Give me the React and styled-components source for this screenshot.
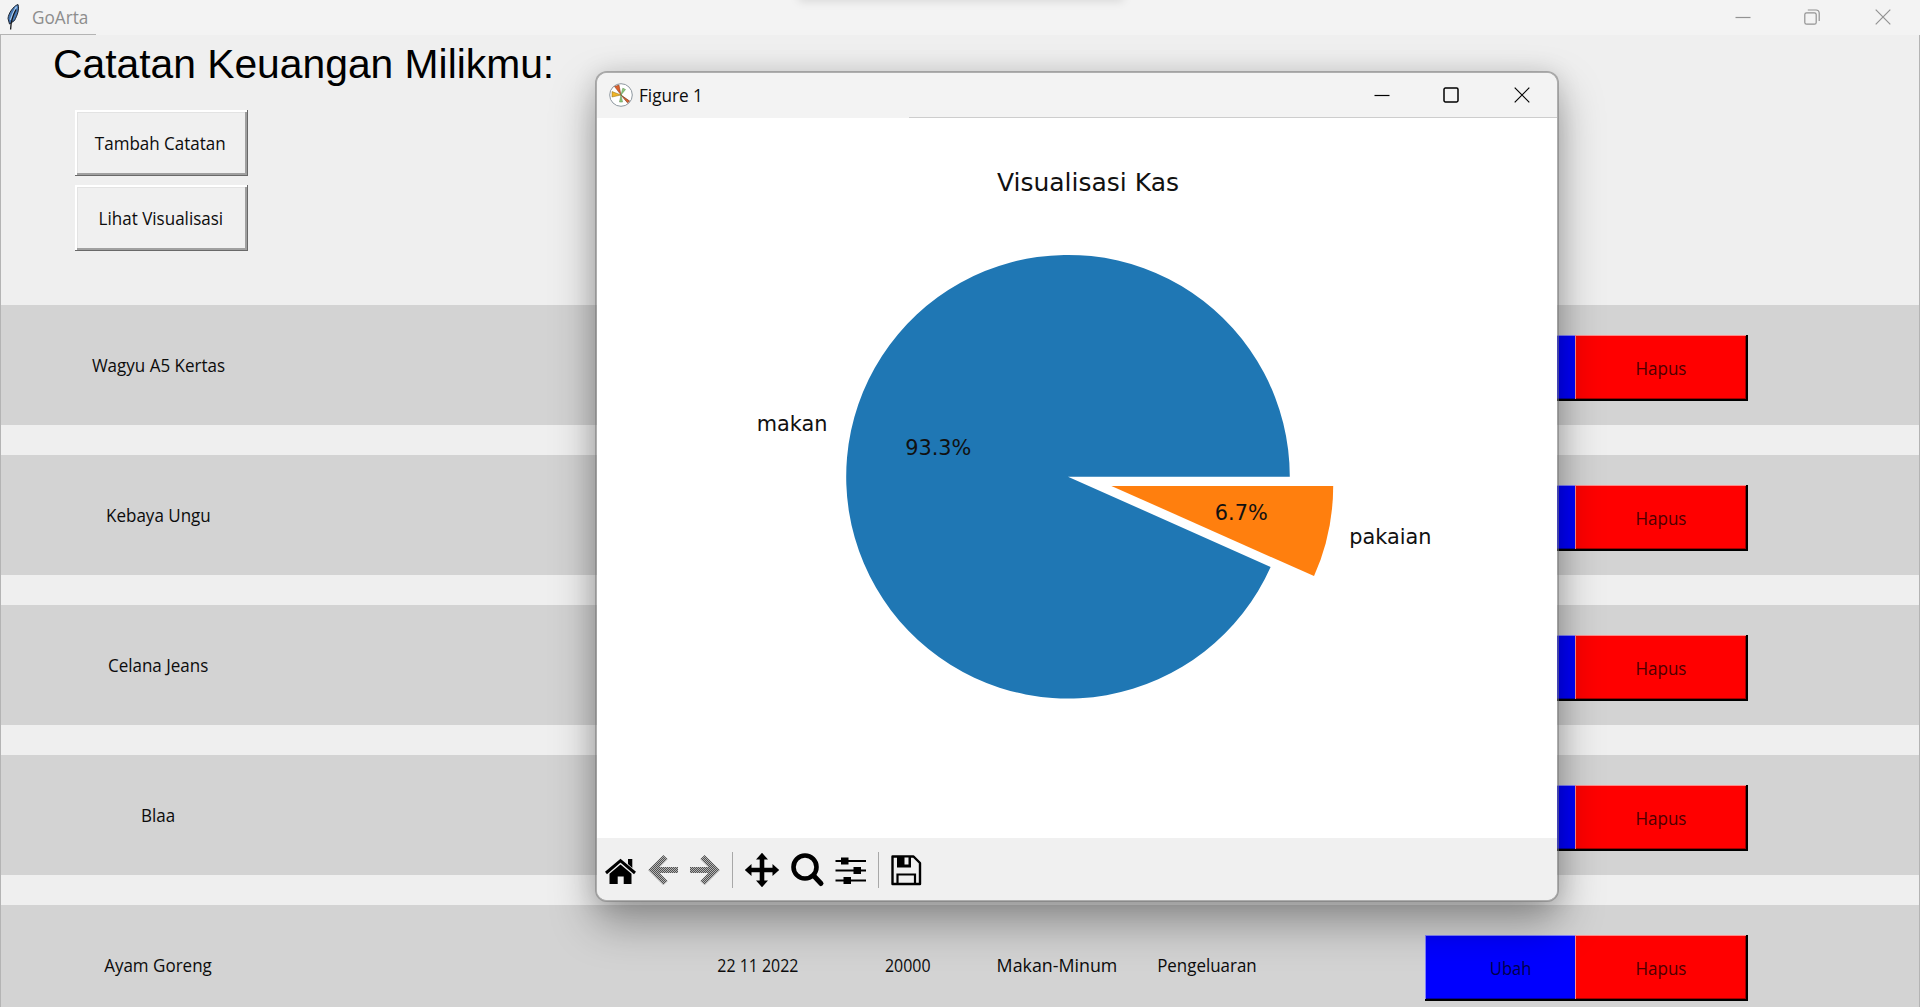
import React from "react";
import styled, { createGlobalStyle } from "styled-components";

const Global = createGlobalStyle`
  * { box-sizing: border-box; }
  html, body { margin: 0; padding: 0; overflow: hidden; }
`;

const uiFont = `"Open Sans", "Noto Sans", sans-serif`;

const Screen = styled.div`
  position: relative;
  width: 1920px;
  height: 1007px;
  overflow: hidden;
  background: #efefef;
  font-family: ${uiFont};
  display: flex;
  flex-direction: column;
`;

const TitleBar = styled.header`
  height: ${(p) => p.$height}px;
  flex: none;
  display: flex;
  align-items: center;
  padding: ${(p) => p.$padding};
  background: #f3f3f3;
`;

const MainBar = styled(TitleBar)`
  background: linear-gradient(#b4b4b4, #b4b4b4) 0 100% / 96px 1px no-repeat, #f3f3f3;
`;

const FigureBar = styled(TitleBar)`
  background: linear-gradient(#cdcdcd, #cdcdcd) 100% 100% / 648px 1px no-repeat, #f3f3f3;
  border-radius: 10px 10px 0 0;
`;

const Label = styled.span`
  display: inline-block;
  flex: none;
  white-space: pre;
  line-height: 24px;
  font-size: ${(p) => p.$size || 18}px;
  color: ${(p) => p.$color || "#0c0c0c"};
  transform: scaleX(${(p) => p.$stretch || 0.945});
  transform-origin: ${(p) => p.$origin || "center"};
`;

const Controls = styled.div`
  margin-left: auto;
  display: flex;
  gap: 53px;
  color: ${(p) => p.$color};

  svg:last-child {
    margin-left: 2px;
  }
`;

const Body = styled.main`
  flex: 1;
  min-height: 0;
  border-left: 1px solid #b4b4b4;
  border-right: 1px solid #b4b4b4;
`;

const Header = styled.section`
  height: 270px;
  padding: 5px 0 0 52px;
`;

const Heading = styled.h1`
  margin: 0 0 22px;
  font: 400 40.8px/48px "Liberation Sans", Arial, sans-serif;
  color: #000;
`;

const Actions = styled.div`
  display: flex;
  flex-direction: column;
  gap: 9px;
  padding-left: 22px;
`;

const TkButton = styled.button`
  width: 173px;
  height: 66px;
  padding: 0 2px 1px 0;
  display: flex;
  align-items: center;
  justify-content: center;
  font-family: inherit;
  border: 0;
  background: #f0f0f0;
  box-shadow: inset -1px -1px #696969, inset 2px 2px #fff, inset -3px -3px #a0a0a0, inset 3px 3px #e3e3e3;
`;

const RowButton = styled(TkButton)`
  flex: none;
  background: ${(p) => p.$fill};
  margin-left: ${(p) => p.$shift || 0}px;
  box-shadow: inset -2px -2px #000, inset 1px 1px ${(p) => p.$light}, inset -3px -3px ${(p) => p.$dark};
`;

const Rows = styled.section`
  display: flex;
  flex-direction: column;
  gap: 30px;
`;

const Row = styled.div`
  height: 120px;
  flex: none;
  display: grid;
  grid-template-columns: 314px 886px 1fr;
  align-items: center;
  background: #d3d3d3;
`;

const Name = styled.div`
  display: flex;
  justify-content: center;
`;

const Details = styled.div`
  display: grid;
  grid-template-columns: 172px 128px 170px 130px;
  padding-left: 357px;
  justify-items: center;
`;

const RowActions = styled.div`
  display: flex;
  padding: 5px 0 0 224px;
  margin-top: 1px;
`;

const TopShade = styled.div`
  position: absolute;
  left: 798px;
  top: -8px;
  width: 326px;
  height: 8px;
  border-radius: 8px;
  box-shadow: 0 1px 10px rgba(0, 0, 0, 0.13);
`;

const FigureWindow = styled.section`
  position: absolute;
  left: 595px;
  top: 71px;
  width: 964px;
  height: 831px;
  border: 2px solid rgba(120, 120, 120, 0.55);
  border-radius: 12px;
  background: #fff;
  background-clip: padding-box;
  display: flex;
  flex-direction: column;
  box-shadow: 0 21px 44px rgba(0, 0, 0, 0.34), 0 0 24px rgba(0, 0, 0, 0.1);
`;

const Canvas = styled.div`
  height: 720px;
  flex: none;
`;

const Toolbar = styled.footer`
  flex: 1;
  display: flex;
  align-items: center;
  padding: 3px 0 1px 6px;
  background: #f0f0f0;
  border-radius: 0 0 10px 10px;
`;

const Tool = styled.svg`
  width: 36px;
  height: 36px;
  flex: none;
  display: block;
  margin-right: ${(p) => p.$after || 0}px;
`;

const Separator = styled.i`
  width: 1px;
  height: 36px;
  background: #a8a8a8;
  margin-right: ${(p) => p.$after}px;
`;

const Glyph = styled.svg`
  display: block;
  width: 16px;
  height: 16px;
  fill: none;
  stroke: currentColor;
  stroke-width: 1.2;
`;

const Feather = styled.svg`
  width: 16px;
  height: 28px;
  margin-right: 9px;
`;

const FigureIcon = styled.svg`
  width: 24px;
  height: 24px;
  margin-right: 6px;
`;

const entries = [
  { name: "Wagyu A5 Kertas" },
  { name: "Kebaya Ungu" },
  { name: "Celana Jeans" },
  { name: "Blaa" },
  {
    name: "Ayam Goreng",
    details: [
      { value: "22 11 2022", stretch: 0.885 },
      { value: "20000", stretch: 0.885 },
      { value: "Makan-Minum", stretch: 0.99 },
      { value: "Pengeluaran", stretch: 0.94 },
    ],
  },
];

function WindowControls({ color, restored }) {
  return (
    <Controls $color={color}>
      <Glyph viewBox="0 0 16 16"><path d="M.5 8.5H15.5" /></Glyph>
      <Glyph viewBox="0 0 16 16">
        {restored ? (
          <>
            <rect x=".8" y="3.8" width="11.4" height="11.4" rx="1.8" />
            <path d="M3.8 1H12q3.2 0 3.2 3.2V12" />
          </>
        ) : (
          <rect x="1" y="1" width="14" height="14" rx="1.4" strokeWidth="1.5" />
        )}
      </Glyph>
      <Glyph viewBox="0 0 16 16"><path d="M.7 .7 15.3 15.3M15.3 .7 .7 15.3" /></Glyph>
    </Controls>
  );
}

const R = 221.8;
const C = { x: 471, y: 358.7 };
const rad = Math.PI / 180;

function wedge(cx, cy, from, to, large) {
  const px = (a) => cx + R * Math.cos(a * rad);
  const py = (a) => cy + R * Math.sin(a * rad);
  return `M${cx} ${cy}L${px(from)} ${py(from)}A${R} ${R} 0 ${large} 1 ${px(to)} ${py(to)}Z`;
}

function PieChart() {
  const ex = C.x + 43.4;
  const ey = C.y + 9.2;
  return (
    <svg width="960" height="720" viewBox="0 0 960 720" fontFamily='"DejaVu Sans", sans-serif' fontSize="20.83" fill="#111">
      <path d={wedge(C.x, C.y, 24, 360, 1)} fill="#1f77b4" />
      <path d={wedge(ex, ey, 0, 24, 0)} fill="#ff7f0e" />
      <text x="491" y="72.5" fontSize="25" textAnchor="middle">Visualisasi Kas</text>
      <text x="230.5" y="313" textAnchor="end">makan</text>
      <text x="341.3" y="337.3" textAnchor="middle">93.3%</text>
      <text x="644.3" y="402" textAnchor="middle">6.7%</text>
      <text x="752.3" y="426">pakaian</text>
    </svg>
  );
}

function ToolIcons() {
  return (
    <Toolbar>
      <Tool viewBox="0 0 36 36" $after={7}>
        <path d="M3 21 17.5 8.600 32 21" fill="none" stroke="#000" strokeWidth="3" />
        <path d="M25 7h4.300v9L25 12zM6.500 21.700 17.500 12.600l11 9.100V32H20.700v-7.500h-6V32H6.500z" />
      </Tool>
      <Tool viewBox="0 0 36 36" $after={5}>
        <path d="M19.500 5 6.500 18 19.500 31M6.500 18H32" fill="none" stroke="url(#dots)" strokeWidth="6" />
        <defs>
          <pattern id="dots" width="2" height="2" patternUnits="userSpaceOnUse">
            <rect width="2" height="2" fill="#b4b4b4" />
            <rect width="1" height="1" fill="#505050" />
            <rect x="1" y="1" width="1" height="1" fill="#505050" />
          </pattern>
        </defs>
      </Tool>
      <Tool viewBox="0 0 36 36" $after={9}>
        <path d="M15.500 5 28.500 18 15.500 31M28.500 18H3" fill="none" stroke="url(#dots)" strokeWidth="6" />
      </Tool>
      <Separator $after={11} />
      <Tool viewBox="0 0 36 36" $after={10}>
        <path d="M18 .8 24 7.500H20.300V15.700H28.500V12L35.200 18 28.500 24V20.300H20.300V28.500H24L18 35.200 12 28.500H15.700V20.300H7.500V24L.8 18 7.500 12V15.700H15.700V7.500H12z" />
      </Tool>
      <Tool viewBox="0 0 36 36" $after={7}>
        <circle cx="15" cy="15" r="11.500" fill="none" stroke="#000" strokeWidth="4.600" />
        <path d="m23.500 23.500 7.500 8" stroke="#000" strokeWidth="5" strokeLinecap="round" />
      </Tool>
      <Tool viewBox="0 0 36 36" $after={9}>
        <path d="M2.500 9H33M2.500 18.500H33M2.500 28.500H33" stroke="#000" strokeWidth="2.200" />
        <path d="M8 5.500h7.500v7H8zM20.500 15h7.500v7h-7.500zM10.500 25h7.500v7h-7.500z" />
      </Tool>
      <Separator $after={9} />
      <Tool viewBox="0 0 36 36">
        <path d="M4.500 4.500h21L32 11V32H4.500z" fill="none" stroke="#000" strokeWidth="2.400" strokeLinejoin="round" />
        <path d="M9 4h14v11.500H9z" />
        <path d="M16.500 5.500h4v7h-4z" fill="#f0f0f0" />
        <path d="M9.500 32V22.500h17.500V32" fill="none" stroke="#000" strokeWidth="2.200" />
      </Tool>
    </Toolbar>
  );
}

export default function App() {
  return (
    <Screen>
      <Global />
      <MainBar $height={35} $padding="0 29px 2px 7px">
        <Feather viewBox="0 0 16 28">
          <path d="M11 1.500C6.500 3 1.500 10 1 15.500L2.500 21 7.500 17.500C10.500 12 12.500 6 11 1.500Z" fill="#4778b4" stroke="#1c2430" strokeWidth="1" />
          <path d="M9.500 3.500C7 8 5 12 3.500 17" stroke="#a8cdf2" strokeWidth="1.500" fill="none" />
          <path d="M9 6.500C6 12 3.800 18 3.600 26.500" stroke="#16181c" strokeWidth="1.300" fill="none" />
        </Feather>
        <Label $color="#8d8d8d" $size={17.5} $stretch={0.98} $origin="left">GoArta</Label>
        <WindowControls color="#929292" restored />
      </MainBar>
      <Body>
        <Header>
          <Heading>Catatan Keuangan Milikmu:</Heading>
          <Actions>
            <TkButton><Label>Tambah Catatan</Label></TkButton>
            <TkButton><Label>Lihat Visualisasi</Label></TkButton>
          </Actions>
        </Header>
        <Rows>
          {entries.map((entry) => (
            <Row key={entry.name}>
              <Name><Label>{entry.name}</Label></Name>
              <Details>
                {entry.details?.map((d) => (
                  <Label key={d.value} $stretch={d.stretch}>{d.value}</Label>
                ))}
              </Details>
              <RowActions>
                <RowButton $fill="#0000ff" $light="#8080ff" $dark="#0000a0">
                  <Label $color="#00004c" $stretch={0.92}>Ubah</Label>
                </RowButton>
                <RowButton $fill="#ff0000" $light="#ff8c8c" $dark="#a00000" $shift={-23}>
                  <Label $color="#4c0000">Hapus</Label>
                </RowButton>
              </RowActions>
            </Row>
          ))}
        </Rows>
      </Body>
      <TopShade />
      <FigureWindow>
        <FigureBar $height={45} $padding="0 27px 2px 12px">
          <FigureIcon viewBox="0 0 24 24">
            <circle cx="12" cy="12" r="11.300" fill="#fff" stroke="#8e979f" />
            <path d="M12 12 5.500 3.500 10 2z" fill="#dc5f2c" stroke="#7a3a1c" strokeWidth=".5" />
            <path d="M12 12 3 14V8.500z" fill="#f0b428" stroke="#8a6a1c" strokeWidth=".5" />
            <path d="M12 12 18.500 19.800 20.500 18z" fill="#dc5f2c" stroke="#7a3a1c" strokeWidth=".7" />
            <path d="M12 12 13.800 5.200 16.500 6.500zM12 12 10.500 19H13.500z" fill="#8fca7c" stroke="#55864a" strokeWidth=".5" />
          </FigureIcon>
          <Label $size={17.5} $stretch={0.98} $origin="left">Figure 1</Label>
          <WindowControls color="#000" />
        </FigureBar>
        <Canvas><PieChart /></Canvas>
        <ToolIcons />
      </FigureWindow>
    </Screen>
  );
}
